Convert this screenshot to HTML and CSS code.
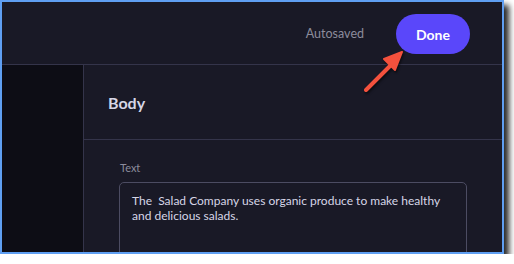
FILE: index.html
```html
<!DOCTYPE html>
<html lang="en">
<head>
    <meta charset="UTF-8">
    <meta name="viewport" content="width=device-width, initial-scale=1.0">
    <title>Editor</title>
    <link rel="stylesheet" href="styles.css">
</head>
<body>
    <div class="frame">
        <div class="topbar">
            <span class="save-status">Autosaved</span>
            <button class="done-btn">Done</button>
        </div>

        <div class="main">
            <div class="sidebar"></div>
            <div class="panel">
                <div class="panel-title">Body</div>
                <div class="field">
                    <div class="field-label">Text</div>
                    <div class="field-input">The&nbsp; Salad Company uses organic produce to make healthy and delicious salads.</div>
                </div>
            </div>
        </div>

        <!-- callout arrow pointing at the Done button -->
        <svg class="callout" width="60" height="60" viewBox="0 0 60 60">
            <g fill="#f4513d" stroke="#f4513d" stroke-linecap="round" stroke-linejoin="round">
                <line x1="8" y1="50" x2="34" y2="24" stroke-width="4"/>
                <polygon points="44,12 26,19 37,30" stroke-width="2"/>
            </g>
        </svg>
    </div>
</body>
</html>
```

FILE: styles.css
```css
:root {
    --bg: #191926;
    --sidebar: #0d0d15;
    --line: #34344a;
    --text: #d6d6e6;
    --muted: #8c8c9c;
    --accent: #5a47fa;
}

body {
    margin: 0;
    background: #fff;
    font-family: Lato, "Noto Sans", sans-serif;
}

.frame {
    position: relative;
    width: 500px;
    height: 250px;
    border: 2px solid #5f9ff2;
    background: var(--bg);
    box-shadow: 5px 5px 6px rgba(0, 0, 0, 0.85);
    display: flex;
    flex-direction: column;
    overflow: hidden;
}

.topbar {
    height: 62px;
    flex-shrink: 0;
    border-bottom: 1px solid var(--line);
    display: flex;
    align-items: center;
    justify-content: flex-end;
    padding-right: 32px;
}

.save-status {
    color: var(--muted);
    font-size: 12.5px;
    margin-right: 32px;
}

.done-btn {
    width: 74px;
    height: 40px;
    border: none;
    border-radius: 20px;
    background: var(--accent);
    color: #fff;
    font-family: Lato, "Noto Sans", sans-serif;
    font-size: 14px;
    font-weight: 700;
    margin-top: 2px;
}

.main {
    flex: 1;
    display: flex;
}

.sidebar {
    width: 81px;
    background: var(--sidebar);
    border-right: 1px solid var(--line);
}

.panel {
    flex: 1;
}

.panel-title {
    height: 75px;
    border-bottom: 1px solid var(--line);
    box-sizing: border-box;
    display: flex;
    align-items: center;
    padding-left: 24px;
    color: var(--text);
    font-size: 16px;
    font-weight: 700;
}

.field {
    padding: 21px 35px 0 35px;
}

.field-label {
    color: var(--muted);
    font-size: 11px;
    margin-bottom: 8px;
    padding-left: 1px;
}

.field-input {
    border: 1px solid #4c4c62;
    border-radius: 5px;
    height: 120px;
    padding: 10px 12px;
    color: var(--text);
    font-size: 12px;
    line-height: 15px;
}

.callout {
    position: absolute;
    left: 356px;
    top: 38px;
    filter: drop-shadow(1px 2px 1px rgba(0, 0, 0, 0.5));
}
```
